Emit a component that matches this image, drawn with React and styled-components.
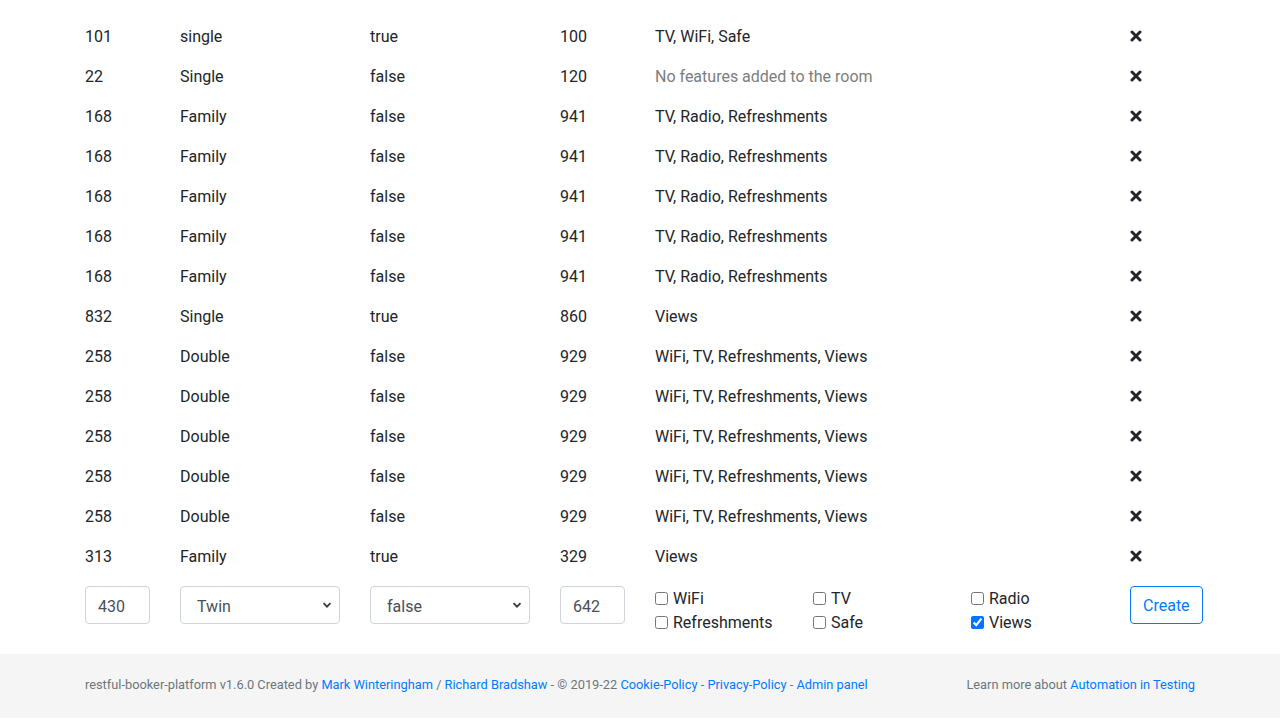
import React from "react";
import styled, { createGlobalStyle } from "styled-components";

const Global = createGlobalStyle`
  html, body { margin: 0; padding: 0; background: #fff; }
  body {
    font-family: Roboto, "Noto Sans", sans-serif;
    font-size: 16px;
    line-height: 1.5;
    color: #212529;
  }
  * { box-sizing: border-box; }
`;

const Container = styled.div`
  width: 1140px;
  margin: 0 auto;
  padding: 16px 15px 0;
`;

const Grid = styled.div`
  display: grid;
  grid-template-columns: 65px 160px 160px 65px 445px 65px;
  column-gap: 30px;
  align-items: ${(p) => (p.$form ? "start" : "center")};
  height: ${(p) => p.$h || 40}px;
  margin-top: ${(p) => p.$mt || 0}px;
`;

const Cell = styled.div`
  padding-top: 2px;
  color: ${(p) => (p.$muted ? "#7d7d7d" : "#212529")};
  white-space: nowrap;
`;

const DeleteBtn = styled.span`
  display: inline-flex;
  width: 12px;
  height: 12px;
  margin-top: 2px;
  cursor: pointer;
`;

const Input = styled.input`
  width: 100%;
  height: 38px;
  padding: 8px 12px 6px;
  font: inherit;
  color: #495057;
  border: 1px solid #ced4da;
  border-radius: 4px;
  background: #fff;
`;

const Select = styled.select`
  width: 100%;
  height: 38px;
  padding: 8px 28px 6px 16px;
  font: inherit;
  color: #495057;
  border: 1px solid #ced4da;
  border-radius: 4px;
  appearance: none;
  background: #fff;
`;

const Chevron = styled.svg`
  position: absolute;
  right: 8px;
  top: 50%;
  width: 10px;
  height: 10px;
  transform: translateY(-50%);
  pointer-events: none;
`;

const SelectWrap = styled.div`
  position: relative;
`;

const Features = styled.div`
  display: grid;
  grid-template-columns: repeat(3, 158px);
`;

const Check = styled.label`
  display: flex;
  align-items: center;
  height: 24px;
  padding-top: 2px;
  font-size: 16px;
  input {
    width: 13px;
    height: 13px;
    margin: 0 5px 1px 0;
  }
`;

const CreateBtn = styled.button`
  justify-self: start;
  height: 38px;
  padding: 2px 12px 0;
  font: inherit;
  color: #007bff;
  background: transparent;
  border: 1px solid #007bff;
  border-radius: 4px;
  cursor: pointer;
`;

const Footer = styled.footer`
  margin-top: 20px;
  background: #f5f5f5;
  padding: 21px 0 24px;
  font-size: 12.8px;
  color: #6c757d;
`;

const FooterInner = styled.div`
  width: 1140px;
  margin: 0 auto;
  padding: 0 15px;
  display: flex;
  justify-content: space-between;
`;

const Link = styled.a`
  color: #007bff;
  text-decoration: none;
`;

const rooms = [
  ["101", "single", "true", "100", "TV, WiFi, Safe"],
  ["22", "Single", "false", "120", null],
  ["168", "Family", "false", "941", "TV, Radio, Refreshments"],
  ["168", "Family", "false", "941", "TV, Radio, Refreshments"],
  ["168", "Family", "false", "941", "TV, Radio, Refreshments"],
  ["168", "Family", "false", "941", "TV, Radio, Refreshments"],
  ["168", "Family", "false", "941", "TV, Radio, Refreshments"],
  ["832", "Single", "true", "860", "Views"],
  ["258", "Double", "false", "929", "WiFi, TV, Refreshments, Views"],
  ["258", "Double", "false", "929", "WiFi, TV, Refreshments, Views"],
  ["258", "Double", "false", "929", "WiFi, TV, Refreshments, Views"],
  ["258", "Double", "false", "929", "WiFi, TV, Refreshments, Views"],
  ["258", "Double", "false", "929", "WiFi, TV, Refreshments, Views"],
  ["313", "Family", "true", "329", "Views"],
];

const CrossIcon = () => (
  <svg width="12" height="12" viewBox="0 0 12 12">
    <path d="M2 2L10 10M10 2L2 10" stroke="#212529" strokeWidth="3" strokeLinecap="round" />
  </svg>
);

const ChevronIcon = () => (
  <Chevron viewBox="0 0 10 10">
    <path d="M1.5 3.2L5 6.7L8.5 3.2" stroke="#343a40" strokeWidth="1.8" fill="none" />
  </Chevron>
);

const features = [
  ["WiFi", false],
  ["TV", false],
  ["Radio", false],
  ["Refreshments", false],
  ["Safe", false],
  ["Views", true],
];

export default function App() {
  return (
    <>
      <Global />
      <Container>
        {rooms.map((r, i) => (
          <Grid key={i}>
            <Cell>{r[0]}</Cell>
            <Cell>{r[1]}</Cell>
            <Cell>{r[2]}</Cell>
            <Cell>{r[3]}</Cell>
            <Cell $muted={!r[4]}>{r[4] || "No features added to the room"}</Cell>
            <Cell>
              <DeleteBtn><CrossIcon /></DeleteBtn>
            </Cell>
          </Grid>
        ))}
        <Grid $form $h={48} $mt={10}>
          <Input defaultValue="430" />
          <SelectWrap>
            <Select defaultValue="Twin">
              <option>Single</option>
              <option>Twin</option>
              <option>Double</option>
              <option>Family</option>
              <option>Suite</option>
            </Select>
            <ChevronIcon />
          </SelectWrap>
          <SelectWrap>
            <Select defaultValue="false">
              <option>false</option>
              <option>true</option>
            </Select>
            <ChevronIcon />
          </SelectWrap>
          <Input defaultValue="642" />
          <Features>
            {features.map(([name, checked]) => (
              <Check key={name}>
                <input type="checkbox" defaultChecked={checked} />
                {name}
              </Check>
            ))}
          </Features>
          <CreateBtn>Create</CreateBtn>
        </Grid>
      </Container>
      <Footer>
        <FooterInner>
          <span>
            restful-booker-platform v1.6.0 Created by <Link href="#">Mark Winteringham</Link> /{" "}
            <Link href="#">Richard Bradshaw</Link> - © 2019-22 <Link href="#">Cookie-Policy</Link> -{" "}
            <Link href="#">Privacy-Policy</Link> - <Link href="#">Admin panel</Link>
          </span>
          <span>
            Learn more about <Link href="#">Automation in Testing</Link>
          </span>
        </FooterInner>
      </Footer>
    </>
  );
}
